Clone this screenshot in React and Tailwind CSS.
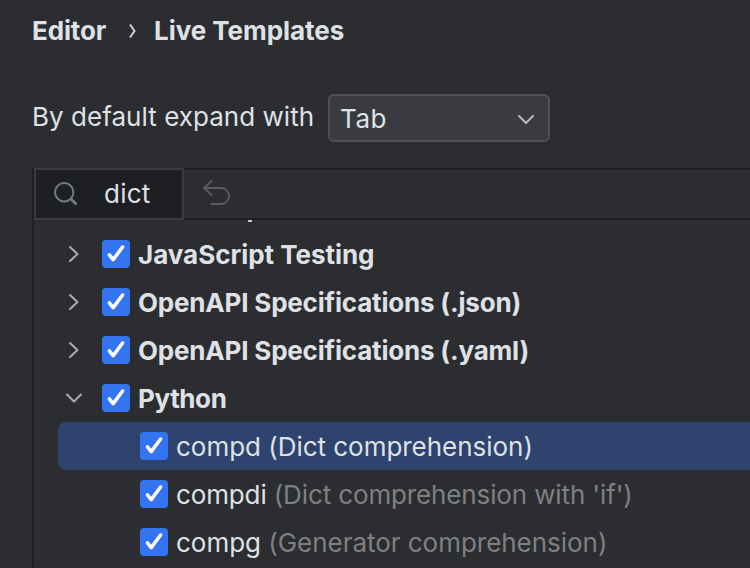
function Chevron({ open }) {
  return (
    <svg className="h-8 w-8 shrink-0" viewBox="0 0 32 32" fill="none" stroke="#a9abb0" strokeWidth="2" strokeLinecap="round" strokeLinejoin="round">
      <path d={open ? 'M9 12.5L16 19.5L23 12.5' : 'M12 9L19.5 16L12 23'} />
    </svg>
  );
}

function Checkbox() {
  return (
    <span className="flex h-7 w-7 shrink-0 rounded-[4px] bg-[#3574f0]">
      <svg className="h-7 w-7" viewBox="0 0 28 28" fill="none" stroke="#fff" strokeWidth="3.5" strokeLinecap="round" strokeLinejoin="round">
        <path d="M7.4 14.8L11.2 19.6L20.6 7" />
      </svg>
    </span>
  );
}

function Group({ name, open, tracking = '' }) {
  return (
    <div className="flex h-12 shrink-0 items-center pl-6">
      <Chevron open={open} />
      <div className="ml-3 flex items-center gap-2">
        <Checkbox />
        <span className={`pt-0.5 text-[26px] leading-8 font-bold ${tracking}`}>{name}</span>
      </div>
    </div>
  );
}

function Template({ name, description, selected, tracking = 'tracking-[-0.03px]' }) {
  return (
    <div className={`ml-6 flex h-12 shrink-0 items-center gap-2 rounded-l-lg pl-[82px] ${selected ? 'bg-[#2e436e]' : ''}`}>
      <Checkbox />
      <span className={`pt-0.5 text-[26px] leading-8 ${tracking}`}>
        {name} <span className={selected ? '' : 'text-[#7f8080]'}>{description}</span>
      </span>
    </div>
  );
}

export default function App() {
  return (
    <div className="flex h-[568px] w-[750px] flex-col overflow-hidden border-b border-[#2a262b] bg-[#2b2d30] font-['Inter',sans-serif] whitespace-nowrap text-[#dfe1e5]">
      <header className="flex h-[62px] shrink-0 items-center pb-0.5 pl-8 text-[26px] font-bold">
        <span className="w-[74px] tracking-[-0.15px]">Editor</span>
        <svg className="mr-[18px] ml-[18px] h-6 w-3" viewBox="0 0 12 24" fill="none" stroke="#ced0d6" strokeWidth="2">
          <path d="M6 6.5L10.5 13L6 19.5" />
        </svg>
        <span className="tracking-[-0.05px]">Live Templates</span>
      </header>

      <div className="mt-8 flex h-12 shrink-0 pl-8 text-[26px] leading-[46px]">
        <span className="w-[282px] tracking-[0.04px]">By default expand with</span>
        <div className="ml-[14px] flex h-12 w-[222px] items-center justify-between rounded-md border-2 border-[#4e5157] bg-[#393b40] pr-[6px] pl-[10px]">
          <span className="pt-0.5 tracking-[0.5px]">Tab</span>
          <svg className="h-8 w-8" viewBox="0 0 32 32" fill="none" stroke="#b4b8bf" strokeWidth="2" strokeLinecap="round" strokeLinejoin="round">
            <path d="M9 14L16 21L23 14" />
          </svg>
        </div>
      </div>

      <section className="mt-[26px] ml-8 flex h-[400px] flex-col border-l-2 border-[#1e1f22]">
        <div className="flex h-[52px] shrink-0">
          <div className="flex w-[150px] items-center border-2 border-[#393b40] bg-[#1e1f22] pl-4">
            <svg className="h-8 w-8" viewBox="0 0 32 32" fill="none" stroke="#6f7a82" strokeWidth="2">
              <circle cx="12.2" cy="14.2" r="9.2" />
              <path d="M18.5 20.5L24.5 26.5" strokeWidth="3" />
            </svg>
            <span className="ml-5 text-[26px] leading-8 tracking-[0.25px]">dict</span>
          </div>
          <div className="flex flex-1 items-center border-y-2 border-[#1e1f22] pl-4">
            <svg className="h-8 w-8" viewBox="0 0 32 32" fill="none" stroke="#5a5b5c" strokeWidth="2">
              <path d="M12 2.5L4 10L12 17.5M4 10H21A8 8 0 0 1 21 26H10.5" />
            </svg>
          </div>
        </div>
        {/* Descender of the row scrolled under the toolbar */}
        <div className="h-[10px] shrink-0 pl-[214px]">
          <div className="h-0.5 w-1 bg-[#c4c6ca]" />
        </div>
        <Group name="JavaScript Testing" tracking="tracking-[-0.03px]" />
        <Group name="OpenAPI Specifications (.json)" tracking="tracking-[-0.19px]" />
        <Group name="OpenAPI Specifications (.yaml)" tracking="tracking-[-0.19px]" />
        <Group name="Python" open tracking="tracking-[-0.4px]" />
        <Template name="compd" description="(Dict comprehension)" selected />
        <Template name="compdi" description="(Dict comprehension with 'if')" tracking="tracking-[-0.13px]" />
        <Template name="compg" description="(Generator comprehension)" />
      </section>
    </div>
  );
}
